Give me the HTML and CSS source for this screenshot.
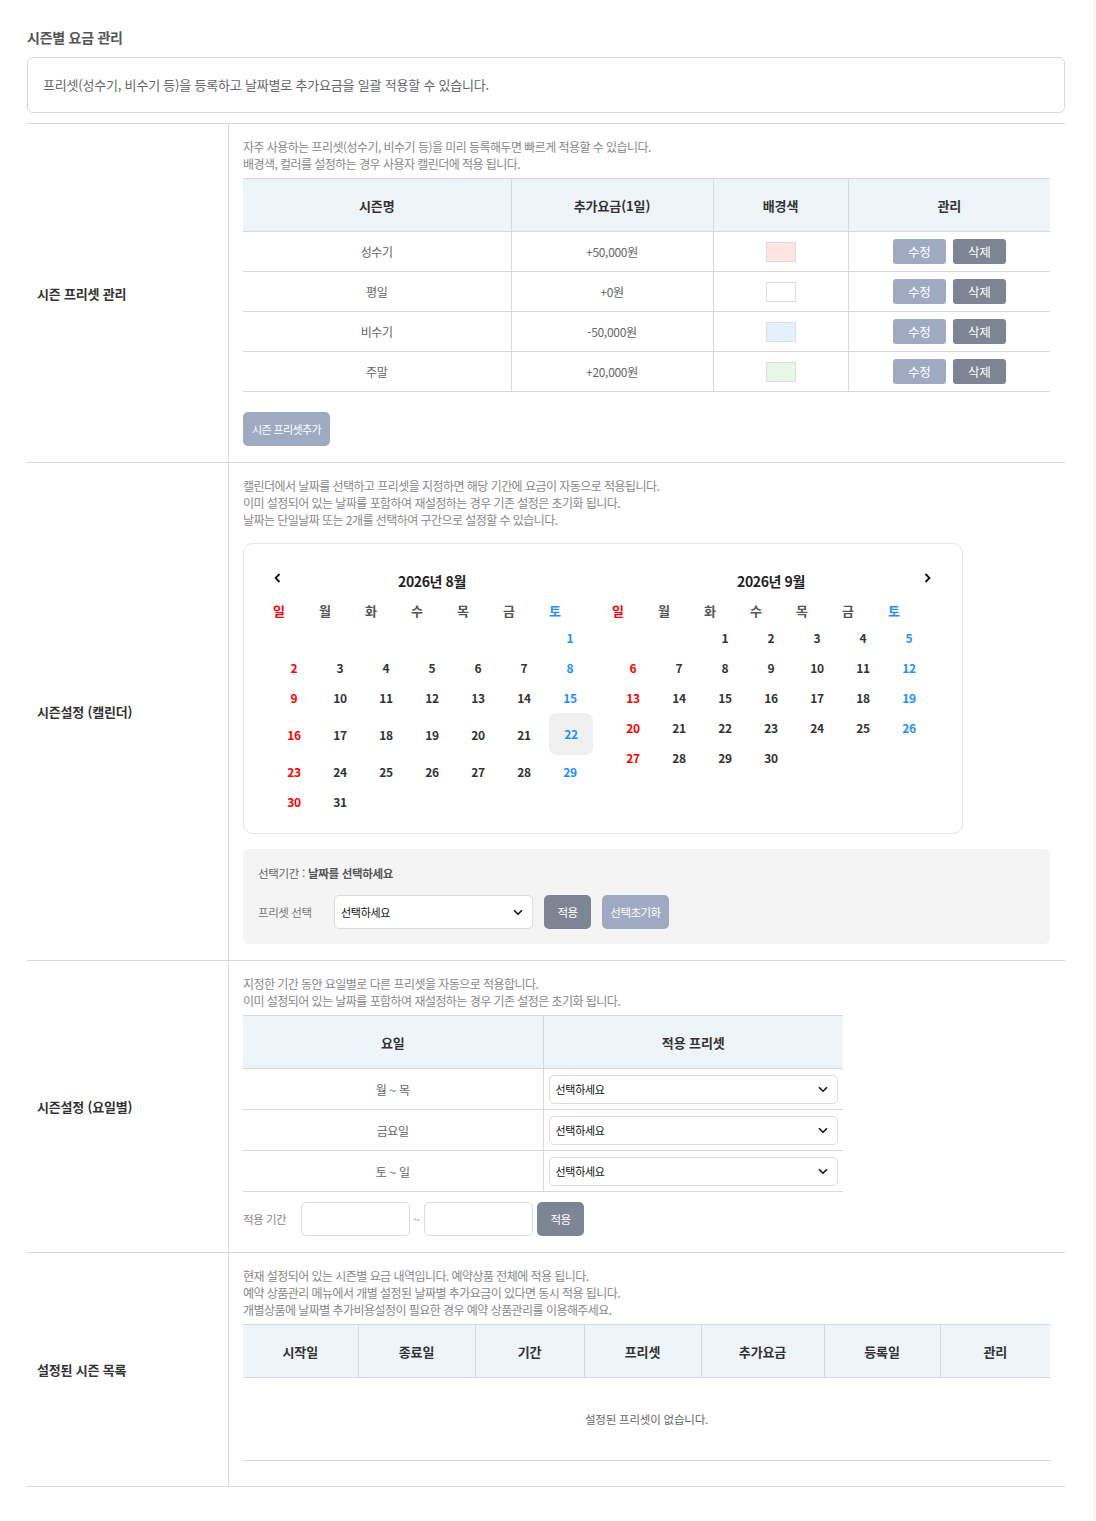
FILE: index.html
```html
<!DOCTYPE html>
<html lang="ko">
<head>
<meta charset="utf-8">
<title>시즌별 요금 관리</title>
<link rel="stylesheet" href="styles.css">
</head>
<body>
<div class="page">
  <h2 class="page-title">시즌별 요금 관리</h2>
  <div class="notice">프리셋(성수기, 비수기 등)을 등록하고 날짜별로 추가요금을 일괄 적용할 수 있습니다.</div>

  <div class="form">
    <!-- 시즌 프리셋 관리 -->
    <div class="row">
      <div class="label">시즌 프리셋 관리</div>
      <div class="content">
        <p class="desc">자주 사용하는 프리셋(성수기, 비수기 등)을 미리 등록해두면 빠르게 적용할 수 있습니다.<br>배경색, 컬러를 설정하는 경우 사용자 캘린더에 적용 됩니다.</p>
        <table class="tbl tbl-preset">
          <colgroup><col class="c-name"><col class="c-fee"><col class="c-bg"><col class="c-mng"></colgroup>
          <thead><tr><th>시즌명</th><th>추가요금(1일)</th><th>배경색</th><th>관리</th></tr></thead>
          <tbody>
            <tr><td>성수기</td><td>+50,000원</td><td><span class="swatch sw-pink"></span></td><td><div class="actions"><button class="btn btn-light btn-sm">수정</button><button class="btn btn-dark btn-sm">삭제</button></div></td></tr>
            <tr><td>평일</td><td>+0원</td><td><span class="swatch sw-white"></span></td><td><div class="actions"><button class="btn btn-light btn-sm">수정</button><button class="btn btn-dark btn-sm">삭제</button></div></td></tr>
            <tr><td>비수기</td><td>-50,000원</td><td><span class="swatch sw-blue"></span></td><td><div class="actions"><button class="btn btn-light btn-sm">수정</button><button class="btn btn-dark btn-sm">삭제</button></div></td></tr>
            <tr><td>주말</td><td>+20,000원</td><td><span class="swatch sw-green"></span></td><td><div class="actions"><button class="btn btn-light btn-sm">수정</button><button class="btn btn-dark btn-sm">삭제</button></div></td></tr>
          </tbody>
        </table>
        <button class="btn btn-light btn-add">시즌 프리셋추가</button>
      </div>
    </div>

    <!-- 시즌설정 (캘린더) -->
    <div class="row">
      <div class="label">시즌설정 (캘린더)</div>
      <div class="content">
        <p class="desc">캘린더에서 날짜를 선택하고 프리셋을 지정하면 해당 기간에 요금이 자동으로 적용됩니다.<br>이미 설정되어 있는 날짜를 포함하여 재설정하는 경우 기존 설정은 초기화 됩니다.<br>날짜는 단일날짜 또는 2개를 선택하여 구간으로 설정할 수 있습니다.</p>
        <div class="calendar">
          <div class="month">
            <div class="month-head">
              <span class="nav nav-prev"><svg width="7" height="10" viewBox="0 0 7 10"><path d="M5.5 1 L1.6 5 L5.5 9" fill="none" stroke="#111" stroke-width="1.8"/></svg></span>
              <span class="month-title">2026년 8월</span>
            </div>
            <div class="weekdays"><span class="sun">일</span><span>월</span><span>화</span><span>수</span><span>목</span><span>금</span><span class="sat">토</span></div>
            <div class="week"><span></span><span></span><span></span><span></span><span></span><span></span><span class="day sat">1</span></div>
            <div class="week"><span class="day sun">2</span><span class="day">3</span><span class="day">4</span><span class="day">5</span><span class="day">6</span><span class="day">7</span><span class="day sat">8</span></div>
            <div class="week"><span class="day sun">9</span><span class="day">10</span><span class="day">11</span><span class="day">12</span><span class="day">13</span><span class="day">14</span><span class="day sat">15</span></div>
            <div class="week tall"><span class="day sun">16</span><span class="day">17</span><span class="day">18</span><span class="day">19</span><span class="day">20</span><span class="day">21</span><span class="day sat today">22</span></div>
            <div class="week"><span class="day sun">23</span><span class="day">24</span><span class="day">25</span><span class="day">26</span><span class="day">27</span><span class="day">28</span><span class="day sat">29</span></div>
            <div class="week"><span class="day sun">30</span><span class="day">31</span><span></span><span></span><span></span><span></span><span></span></div>
          </div>
          <div class="month">
            <div class="month-head">
              <span class="month-title">2026년 9월</span>
              <span class="nav nav-next"><svg width="7" height="10" viewBox="0 0 7 10"><path d="M1.5 1 L5.4 5 L1.5 9" fill="none" stroke="#111" stroke-width="1.8"/></svg></span>
            </div>
            <div class="weekdays"><span class="sun">일</span><span>월</span><span>화</span><span>수</span><span>목</span><span>금</span><span class="sat">토</span></div>
            <div class="week"><span></span><span></span><span class="day">1</span><span class="day">2</span><span class="day">3</span><span class="day">4</span><span class="day sat">5</span></div>
            <div class="week"><span class="day sun">6</span><span class="day">7</span><span class="day">8</span><span class="day">9</span><span class="day">10</span><span class="day">11</span><span class="day sat">12</span></div>
            <div class="week"><span class="day sun">13</span><span class="day">14</span><span class="day">15</span><span class="day">16</span><span class="day">17</span><span class="day">18</span><span class="day sat">19</span></div>
            <div class="week"><span class="day sun">20</span><span class="day">21</span><span class="day">22</span><span class="day">23</span><span class="day">24</span><span class="day">25</span><span class="day sat">26</span></div>
            <div class="week"><span class="day sun">27</span><span class="day">28</span><span class="day">29</span><span class="day">30</span><span></span><span></span><span></span></div>
          </div>
        </div>
        <div class="select-panel">
          <div class="period">선택기간 : <b>날짜를 선택하세요</b></div>
          <div class="panel-row">
            <span class="panel-label">프리셋 선택</span>
            <div class="select select-lg"><span>선택하세요</span><svg width="10" height="7" viewBox="0 0 10 7"><path d="M1 1.2 L5 5.2 L9 1.2" fill="none" stroke="#111" stroke-width="1.6"/></svg></div>
            <button class="btn btn-dark btn-md btn-apply">적용</button>
            <button class="btn btn-light btn-md btn-reset">선택초기화</button>
          </div>
        </div>
      </div>
    </div>

    <!-- 시즌설정 (요일별) -->
    <div class="row">
      <div class="label">시즌설정 (요일별)</div>
      <div class="content">
        <p class="desc">지정한 기간 동안 요일별로 다른 프리셋을 자동으로 적용합니다.<br>이미 설정되어 있는 날짜를 포함하여 재설정하는 경우 기존 설정은 초기화 됩니다.</p>
        <table class="tbl tbl-week">
          <colgroup><col class="c-half"><col class="c-half"></colgroup>
          <thead><tr><th>요일</th><th>적용 프리셋</th></tr></thead>
          <tbody>
            <tr><td>월 ~ 목</td><td class="td-select"><div class="select select-sm"><span>선택하세요</span><svg width="10" height="7" viewBox="0 0 10 7"><path d="M1 1.2 L5 5.2 L9 1.2" fill="none" stroke="#111" stroke-width="1.6"/></svg></div></td></tr>
            <tr><td>금요일</td><td class="td-select"><div class="select select-sm"><span>선택하세요</span><svg width="10" height="7" viewBox="0 0 10 7"><path d="M1 1.2 L5 5.2 L9 1.2" fill="none" stroke="#111" stroke-width="1.6"/></svg></div></td></tr>
            <tr><td>토 ~ 일</td><td class="td-select"><div class="select select-sm"><span>선택하세요</span><svg width="10" height="7" viewBox="0 0 10 7"><path d="M1 1.2 L5 5.2 L9 1.2" fill="none" stroke="#111" stroke-width="1.6"/></svg></div></td></tr>
          </tbody>
        </table>
        <div class="range">
          <span class="range-label">적용 기간</span>
          <div class="input"></div>
          <span class="tilde">~</span>
          <div class="input"></div>
          <button class="btn btn-dark btn-md btn-range">적용</button>
        </div>
      </div>
    </div>

    <!-- 설정된 시즌 목록 -->
    <div class="row">
      <div class="label">설정된 시즌 목록</div>
      <div class="content">
        <p class="desc">현재 설정되어 있는 시즌별 요금 내역입니다. 예약상품 전체에 적용 됩니다.<br>예약 상품관리 메뉴에서 개별 설정된 날짜별 추가요금이 있다면 동시 적용 됩니다.<br>개별상품에 날짜별 추가비용설정이 필요한 경우 예약 상품관리를 이용해주세요.</p>
        <table class="tbl tbl-list">
          <colgroup><col class="l1"><col class="l2"><col class="l3"><col class="l4"><col class="l5"><col class="l6"><col class="l7"></colgroup>
          <thead><tr><th>시작일</th><th>종료일</th><th>기간</th><th>프리셋</th><th>추가요금</th><th>등록일</th><th>관리</th></tr></thead>
          <tbody><tr><td colspan="7" class="empty">설정된 프리셋이 없습니다.</td></tr></tbody>
        </table>
      </div>
    </div>
  </div>
</div>
</body>
</html>
```

FILE: styles.css
```css
* { box-sizing: border-box; }
html, body { margin: 0; padding: 0; background: #fff; }
body {
  font-family: "Noto Sans CJK KR", "Noto Sans", sans-serif;
  color: #333;
}
.page {
  width: 1095px;
  min-height: 1521px;
  border-right: 1px solid #efefef;
  padding: 27px 29px 0 27px;
}
.page-title {
  margin: 0;
  font-size: 14px;
  line-height: 20px;
  font-weight: 700;
  color: #555;
  letter-spacing: -0.25px;
}
.notice {
  margin-top: 10px;
  border: 1px solid #d6d9dd;
  border-radius: 6px;
  padding: 19px 15px;
  font-size: 13px;
  line-height: 16px;
  color: #666;
  letter-spacing: -0.2px;
}
.form {
  margin-top: 10px;
  border-top: 1px solid #d6d9dd;
}
.row {
  display: grid;
  grid-template-columns: 202px 1fr;
  border-bottom: 1px solid #d6d9dd;
}
.label {
  display: flex;
  align-items: center;
  padding-left: 10px;
  border-right: 1px solid #d6d9dd;
  font-size: 13px;
  font-weight: 700;
  color: #333;
  letter-spacing: -0.2px;
}
.content { padding: 14px 15px 16px 14px; }
.desc {
  margin: 0;
  font-size: 12px;
  line-height: 17px;
  color: #888;
  letter-spacing: -0.55px;
}

/* tables */
.tbl {
  width: 100%;
  border-collapse: collapse;
  table-layout: fixed;
  margin-top: 6px;
}
.tbl th {
  height: 53px;
  padding: 0;
  background: #eff4f8;
  border-top: 1px solid #d6d9dd;
  border-bottom: 1px solid #d6d9dd;
  font-size: 13px;
  font-weight: 700;
  color: #333;
  letter-spacing: -0.1px;
}
.tbl th + th, .tbl td + td { border-left: 1px solid #d6d9dd; }
.tbl td {
  height: 40px;
  padding: 0;
  border-bottom: 1px solid #d6d9dd;
  text-align: center;
  font-size: 12px;
  color: #666;
  letter-spacing: -0.3px;
}
.c-name { width: 268px; }
.c-fee { width: 202px; }
.c-bg { width: 135px; }
.c-mng { width: 202px; }

.swatch {
  display: inline-block;
  width: 30px;
  height: 20px;
  border: 1px solid #dddddd;
  vertical-align: middle;
}
.sw-pink { background: #ffe4e4; }
.sw-white { background: #ffffff; }
.sw-blue { background: #e3f0fd; }
.sw-green { background: #e8f5e9; }

.actions { display: flex; justify-content: center; gap: 7px; }
.btn {
  border: 0;
  padding: 0;
  color: #fff;
  font-family: inherit;
  cursor: pointer;
}
.btn-light { background: #9eabc3; }
.btn-dark { background: #7d8594; }
.btn-sm {
  width: 53px;
  height: 25px;
  border-radius: 3px;
  font-size: 12.5px;
  letter-spacing: -0.3px;
}
.btn-add {
  display: block;
  margin-top: 20px;
  width: 87px;
  height: 34px;
  border-radius: 5px;
  font-size: 11px;
  letter-spacing: -0.6px;
}
.btn-md {
  height: 34px;
  border-radius: 5px;
  font-size: 11.5px;
  letter-spacing: -0.5px;
}
.btn-apply { width: 47px; }
.btn-reset { width: 67px; }
.btn-range { width: 47px; margin-left: 4px; }

/* calendar */
.calendar {
  margin-top: 15px;
  width: 720px;
  border: 1px solid #e6e6e6;
  border-radius: 10px;
  padding: 26px 30px 17px 27px;
  display: flex;
  gap: 17px;
  align-items: flex-start;
}
.month { width: 322px; }
.month-head {
  display: grid;
  grid-template-columns: 24px 1fr 24px;
  height: 22px;
  align-items: center;
}
.month-title {
  grid-row: 1;
  grid-column: 2;
  text-align: center;
  font-size: 14px;
  font-weight: 700;
  color: #222;
  letter-spacing: -0.4px;
}
.nav {
  grid-row: 1;
  align-self: start;
  margin-top: 3px;
  display: flex;
}
.nav-prev { grid-column: 1; justify-self: start; margin-left: 3px; }
.nav-next { grid-column: 3; justify-self: end; margin-right: 1px; }
.weekdays, .week {
  display: grid;
  grid-template-columns: repeat(7, 46px);
  align-items: center;
}
.weekdays { margin-top: 6px; height: 24px; }
.weekdays span {
  padding-left: 2px;
  font-size: 13px;
  font-weight: 700;
  color: #555;
}
.week { height: 30px; }
.week.tall { height: 44px; }
.day {
  text-align: center;
  font-size: 12px;
  font-weight: 700;
  color: #333;
  letter-spacing: -0.3px;
}
.weekdays .sun, .day.sun { color: #ff0000; }
.weekdays .sat, .day.sat { color: #1e90ff; }
.day.today {
  height: 42px;
  line-height: 42px;
  margin-left: 2px;
  background: #f0f0f0;
  border-radius: 8px;
}

/* selection panel */
.select-panel {
  margin-top: 15px;
  background: #f4f4f4;
  border-radius: 6px;
  padding: 16px 15px 15px;
}
.period {
  font-size: 11.5px;
  line-height: 17px;
  color: #666;
  letter-spacing: -0.3px;
}
.period b { color: #555; }
.panel-row {
  margin-top: 13px;
  display: flex;
  align-items: center;
  gap: 11px;
}
.panel-label {
  width: 65px;
  font-size: 11.5px;
  color: #777;
  letter-spacing: -0.4px;
}
.select {
  display: flex;
  align-items: center;
  justify-content: space-between;
  background: #fff;
  border: 1px solid #dcdcdc;
  border-radius: 5px;
  padding: 0 9px 0 6px;
  font-size: 11px;
  color: #111;
  letter-spacing: -0.3px;
}
.select-lg { width: 199px; height: 34px; }
.select-sm { width: 100%; height: 29px; }

/* weekday table */
.tbl-week { width: 600px; }
.c-half { width: 50%; }
.tbl-week td { height: 41px; }
.tbl-week td.td-select { padding: 0 5px 0 5px; }

.range {
  margin-top: 10px;
  display: flex;
  align-items: center;
}
.range-label {
  width: 58px;
  font-size: 11.5px;
  color: #888;
  letter-spacing: -0.5px;
}
.input {
  width: 109px;
  height: 34px;
  background: #fff;
  border: 1px solid #dcdcdc;
  border-radius: 5px;
}
.tilde {
  width: 14px;
  text-align: center;
  font-size: 11px;
  color: #888;
}

/* list table */
.tbl-list { margin-bottom: 9px; }
.l1 { width: 115px; }
.l2 { width: 117px; }
.l3 { width: 109px; }
.l4 { width: 117px; }
.l5 { width: 123px; }
.l6 { width: 116px; }
.l7 { width: 110px; }
.tbl-list td.empty { height: 83px; font-size: 11.5px; letter-spacing: -0.2px; }
```
